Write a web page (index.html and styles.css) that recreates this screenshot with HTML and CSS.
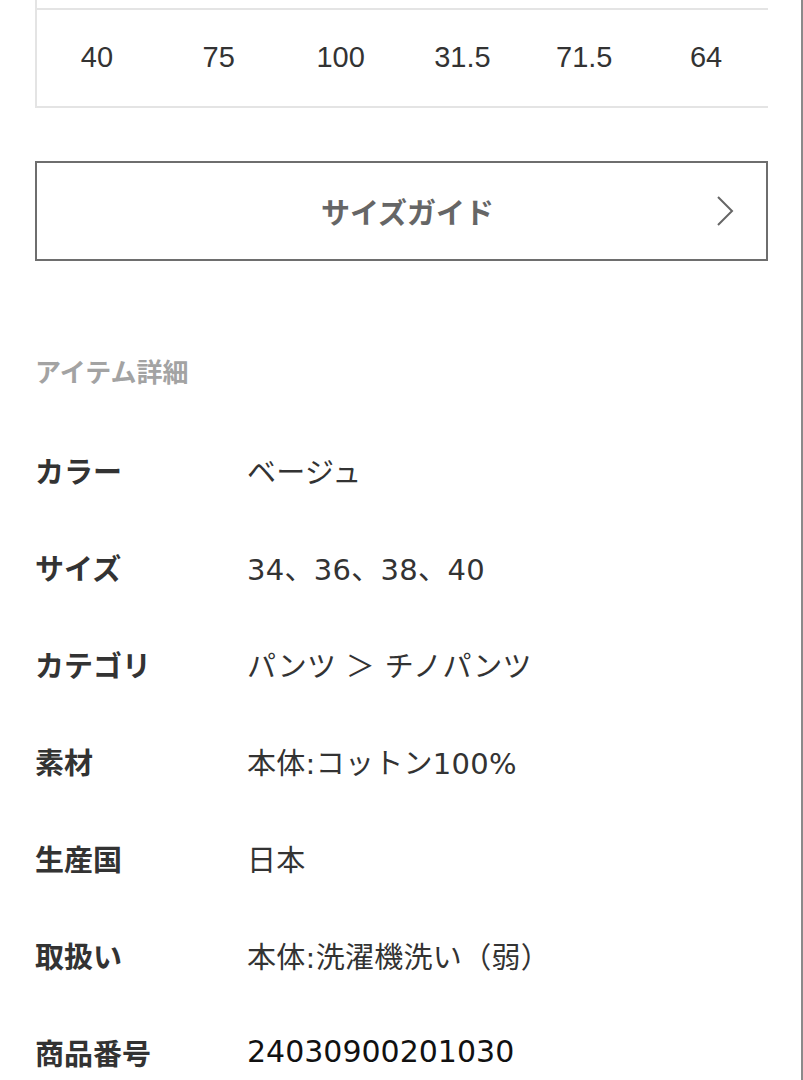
FILE: index.html
```html
<!DOCTYPE html>
<html lang="ja">
<head>
    <meta charset="UTF-8">
    <meta name="viewport" content="width=device-width, initial-scale=1.0">
    <title>アイテム詳細</title>
    <link rel="stylesheet" href="styles.css">
</head>
<body>
    <div class="page">
        <!-- サイズ表 -->
        <div class="size-table">
            <div class="size-row size-row-head"></div>
            <div class="size-row">
                <span>40</span>
                <span>75</span>
                <span>100</span>
                <span>31.5</span>
                <span>71.5</span>
                <span>64</span>
            </div>
        </div>

        <!-- サイズガイドボタン -->
        <a href="#" class="guide-button">
            サイズガイド
            <svg class="chevron" width="20" height="32" viewBox="0 0 20 32">
                <polyline points="3,2 17,16 3,30" fill="none" stroke="#666" stroke-width="2"/>
            </svg>
        </a>

        <!-- アイテム詳細 -->
        <h2 class="section-title">アイテム詳細</h2>
        <dl class="detail-list">
            <div class="detail-row">
                <dt>カラー</dt>
                <dd>ベージュ</dd>
            </div>
            <div class="detail-row">
                <dt>サイズ</dt>
                <dd>34、36、38、40</dd>
            </div>
            <div class="detail-row">
                <dt>カテゴリ</dt>
                <dd>パンツ ＞ チノパンツ</dd>
            </div>
            <div class="detail-row">
                <dt>素材</dt>
                <dd>本体:コットン100%</dd>
            </div>
            <div class="detail-row">
                <dt>生産国</dt>
                <dd>日本</dd>
            </div>
            <div class="detail-row">
                <dt>取扱い</dt>
                <dd>本体:洗濯機洗い（弱）</dd>
            </div>
            <div class="detail-row">
                <dt>商品番号</dt>
                <dd class="item-number">24030900201030</dd>
            </div>
        </dl>
    </div>
</body>
</html>
```

FILE: styles.css
```css
body {
    font-family: "Noto Sans CJK JP", "Noto Sans", sans-serif;
    background-color: #ffffff;
    color: #333333;
    margin: 0;
    padding: 0;
}
.page {
    padding: 0 33px 0 35px;
    border-right: 2px solid #8a8a8a;
    height: 1080px;
    overflow: hidden;
}
.size-table {
    border-left: 2px solid #e4e4e4;
}
.size-row {
    display: grid;
    grid-template-columns: repeat(6, 1fr);
    height: 96px;
    align-items: center;
    border-bottom: 2px solid #e4e4e4;
}
.size-row-head {
    height: 8px;
}
.size-row span {
    text-align: center;
    font-family: "Liberation Sans", "Noto Sans CJK JP", sans-serif;
    font-size: 29px;
    color: #333333;
    margin: 0 0 2px -2px;
}
.guide-button {
    display: flex;
    align-items: center;
    justify-content: center;
    position: relative;
    height: 96px;
    margin-top: 53px;
    padding-left: 12px;
    border: 2px solid #6e6e6e;
    color: #666666;
    font-size: 29px;
    font-weight: bold;
    text-decoration: none;
}
.chevron {
    position: absolute;
    right: 31px;
    top: 32px;
}
.section-title {
    margin: 90px 0 0;
    font-size: 26px;
    line-height: 40px;
    font-weight: bold;
    color: #a3a3a3;
}
.detail-list {
    margin: 30px 0 0;
}
.detail-row {
    display: flex;
    align-items: center;
    height: 97px;
}
.detail-row dt {
    width: 212px;
    flex-shrink: 0;
    font-size: 29px;
    font-weight: bold;
    color: #333333;
}
.detail-row dd {
    margin: 0;
    font-family: "DejaVu Sans", "Noto Sans CJK JP", sans-serif;
    font-size: 29px;
    letter-spacing: 0.3px;
    color: #333333;
}
.detail-row .item-number {
    font-size: 30px;
    letter-spacing: 0;
    color: #111111;
}
```
